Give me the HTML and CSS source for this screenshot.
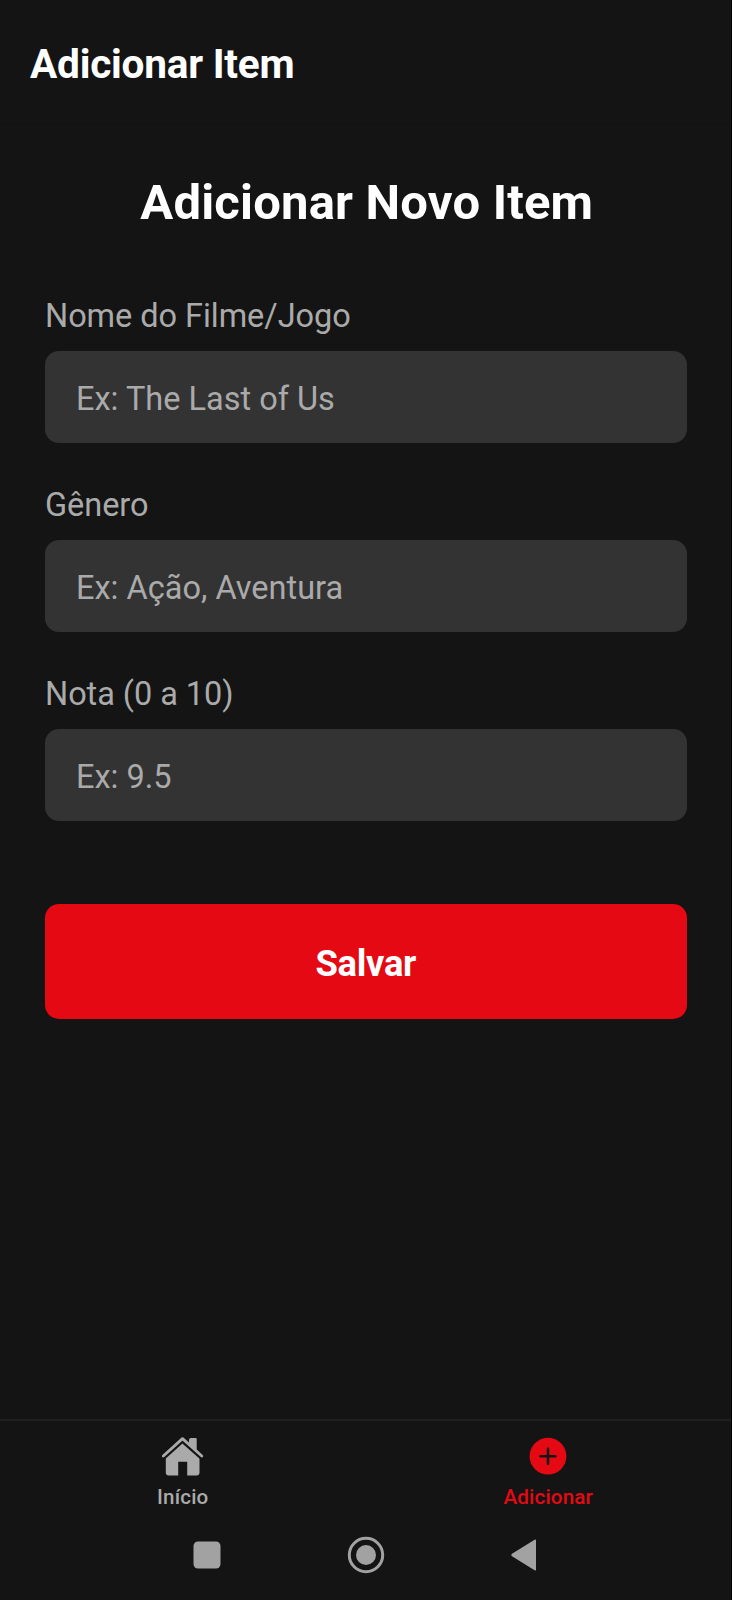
FILE: index.html
```html
<!DOCTYPE html>
<html lang="pt-BR">
<head>
<meta charset="utf-8">
<title>Adicionar Item</title>
<link rel="stylesheet" href="styles.css">
</head>
<body>
<div class="screen">
  <header class="header"><h1 class="header-title">Adicionar Item</h1></header>
  <main class="content">
    <h2 class="title">Adicionar Novo Item</h2>
    <form class="form">
      <div class="field">
        <label class="label" for="nome">Nome do Filme/Jogo</label>
        <input class="input" id="nome" type="text" placeholder="Ex: The Last of Us">
      </div>
      <div class="field">
        <label class="label" for="genero">Gênero</label>
        <input class="input" id="genero" type="text" placeholder="Ex: Ação, Aventura">
      </div>
      <div class="field">
        <label class="label" for="nota">Nota (0 a 10)</label>
        <input class="input" id="nota" type="text" placeholder="Ex: 9.5">
      </div>
      <button class="save" type="button">Salvar</button>
    </form>
  </main>
  <nav class="tabs">
    <a class="tab">
      <svg class="tab-icon" viewBox="0 0 44 44">
        <path d="M4.8 20 21.5 5 38.5 20V36.5a3 3 0 0 1-3 3H26.2V25.7H17.2V39.5H7.8a3 3 0 0 1-3-3Z"/>
        <path class="roof-gap" d="M2.3 20.4 21.5 3.2 40.8 20.4"/>
        <path d="M30 2h4.7a1 1 0 0 1 1 1V15.5L28 8.8V4a2 2 0 0 1 2-2Z"/>
        <path class="roof" d="M2.3 20 21.5 2.6 40.8 20"/>
      </svg>
      <span class="tab-label">Início</span>
    </a>
    <a class="tab tab-active">
      <svg class="tab-icon" viewBox="0 0 44 44">
        <circle cx="22" cy="20.2" r="18.4"/>
        <path class="plus" d="M22 12.8v15M14.5 20.3h15"/>
      </svg>
      <span class="tab-label">Adicionar</span>
    </a>
  </nav>
  <div class="system-bar">
    <svg class="system-icon" viewBox="0 0 40 40"><rect x="6.5" y="6.5" width="27" height="27" rx="4.5"/></svg>
    <svg class="system-icon" viewBox="0 0 40 40"><circle class="ring" cx="20" cy="20" r="16.7"/><circle cx="20" cy="20" r="10"/></svg>
    <svg class="system-icon" viewBox="0 0 40 40"><path d="M7 18.8 29.6 4.8q1.4-.9 1.4.8V34.4q0 1.7-1.4.8L7 21.2q-1.8-1.2 0-2.4Z"/></svg>
  </div>
</div>
</body>
</html>
```
FILE: styles.css
```css
* { box-sizing: border-box; }
body { margin: 0; background: #000; font-family: Roboto, sans-serif; }
.screen {
  display: flex;
  flex-direction: column;
  width: 731px;
  height: 1600px;
  background: #141414;
}
.header {
  display: flex;
  align-items: center;
  height: 125px;
  padding: 3px 30px 0;
  border-bottom: 1px solid #121212;
}
.header-title {
  margin: 0;
  color: #fff;
  font-size: 40.6px;
  line-height: 48px;
  font-weight: 700;
  letter-spacing: -0.24px;
}
.content { flex: 1; padding: 47px 44.5px 0 45px; }
.title {
  margin: 0;
  padding-left: 2px;
  color: #fff;
  font-size: 49px;
  line-height: 62px;
  font-weight: 700;
  letter-spacing: 0.18px;
  text-align: center;
}
.form { display: flex; flex-direction: column; padding-top: 62px; }
.field { display: flex; flex-direction: column; gap: 14px; margin-bottom: 42px; }
.label { color: #aaa; font-size: 32.5px; line-height: 41px; letter-spacing: -0.05px; }
.input {
  height: 92px;
  padding: 3px 31px 0;
  border: 0;
  border-radius: 14px;
  outline: 0;
  background: #333;
  color: #fff;
  font-family: inherit;
  font-size: 32.5px;
}
.input::placeholder { color: #aaa; opacity: 1; }
.save {
  height: 115px;
  margin-top: 40.5px;
  padding: 4px 0 0;
  border: 0;
  border-radius: 14px;
  background: #e50914;
  color: #fff;
  font-family: inherit;
  font-size: 36.4px;
  font-weight: 700;
  letter-spacing: -0.3px;
}
.tabs { display: flex; height: 98.5px; border-top: 2px solid #202020; }
.tab {
  display: flex;
  flex: 1;
  flex-direction: column;
  align-items: center;
  gap: 5px;
  padding-top: 14.5px;
  color: #aaa;
}
.tab-active { color: #e50914; }
.tab-icon { width: 44px; height: 44px; fill: currentColor; }
.tab-label { font-size: 20.6px; line-height: 24px; font-weight: 500; letter-spacing: 0.15px; }
.roof, .roof-gap { fill: none; stroke-linecap: round; stroke-linejoin: round; }
.roof { stroke: #aaa; stroke-width: 2.8; }
.roof-gap { stroke: #141414; stroke-width: 6.5; }
.plus { fill: none; stroke: #141414; stroke-width: 2.6; stroke-linecap: round; }
.system-bar { display: flex; justify-content: center; gap: 119px; height: 82.5px; padding-top: 17.5px; }
.system-icon { width: 40px; height: 40px; fill: #a2a2a2; }
.ring { fill: none; stroke: #a2a2a2; stroke-width: 3; }
```
